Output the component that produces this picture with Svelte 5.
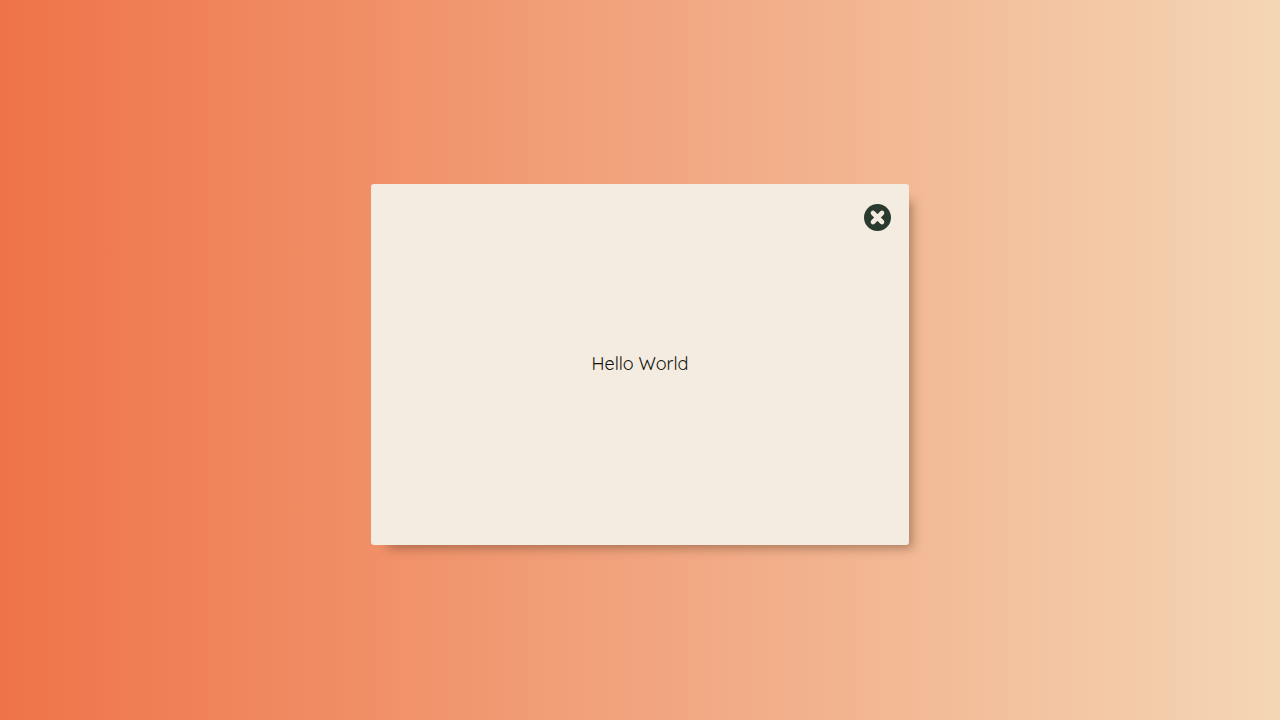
<script lang="ts">
  let open = $state(true);
</script>

<main>
  {#if open}
    <div class="card" role="dialog" aria-label="Greeting">
      <button class="close" type="button" aria-label="Close" onclick={() => (open = false)}>
        <svg viewBox="0 0 27 27" width="27" height="27" aria-hidden="true">
          <circle cx="13.5" cy="13.5" r="13.5" fill="#2a3a2e" />
          <path
            d="M9 9l9 9M18 9l-9 9"
            fill="none"
            stroke="#f4ebe1"
            stroke-width="4.6"
            stroke-linecap="round"
          />
        </svg>
      </button>
      <p>Hello World</p>
    </div>
  {/if}
</main>

<style>
  :global(body) {
    margin: 0;
  }
  main {
    display: flex;
    align-items: center;
    justify-content: center;
    box-sizing: border-box;
    min-height: 100vh;
    padding-top: 9px;
    background: linear-gradient(to right, #ef7348, #f4d6b5);
    font-family: Quicksand, Lato, sans-serif;
  }
  .card {
    position: relative;
    display: flex;
    align-items: center;
    justify-content: center;
    box-sizing: border-box;
    width: 42vw;
    min-height: 361px;
    padding-bottom: 2px;
    background: #f4ebe1;
    border-radius: 3px;
    box-shadow: 10px 10px 10px -7px rgba(80, 50, 30, 0.45);
  }
  /* Pinned to the card's corner */
  .close {
    position: absolute;
    top: 20px;
    right: 18px;
    padding: 0;
    background: none;
    border: none;
    cursor: pointer;
  }
  .close svg {
    display: block;
  }
  p {
    margin: 0;
    color: #12120a;
    font-size: 18px;
    line-height: 24px;
  }
</style>
